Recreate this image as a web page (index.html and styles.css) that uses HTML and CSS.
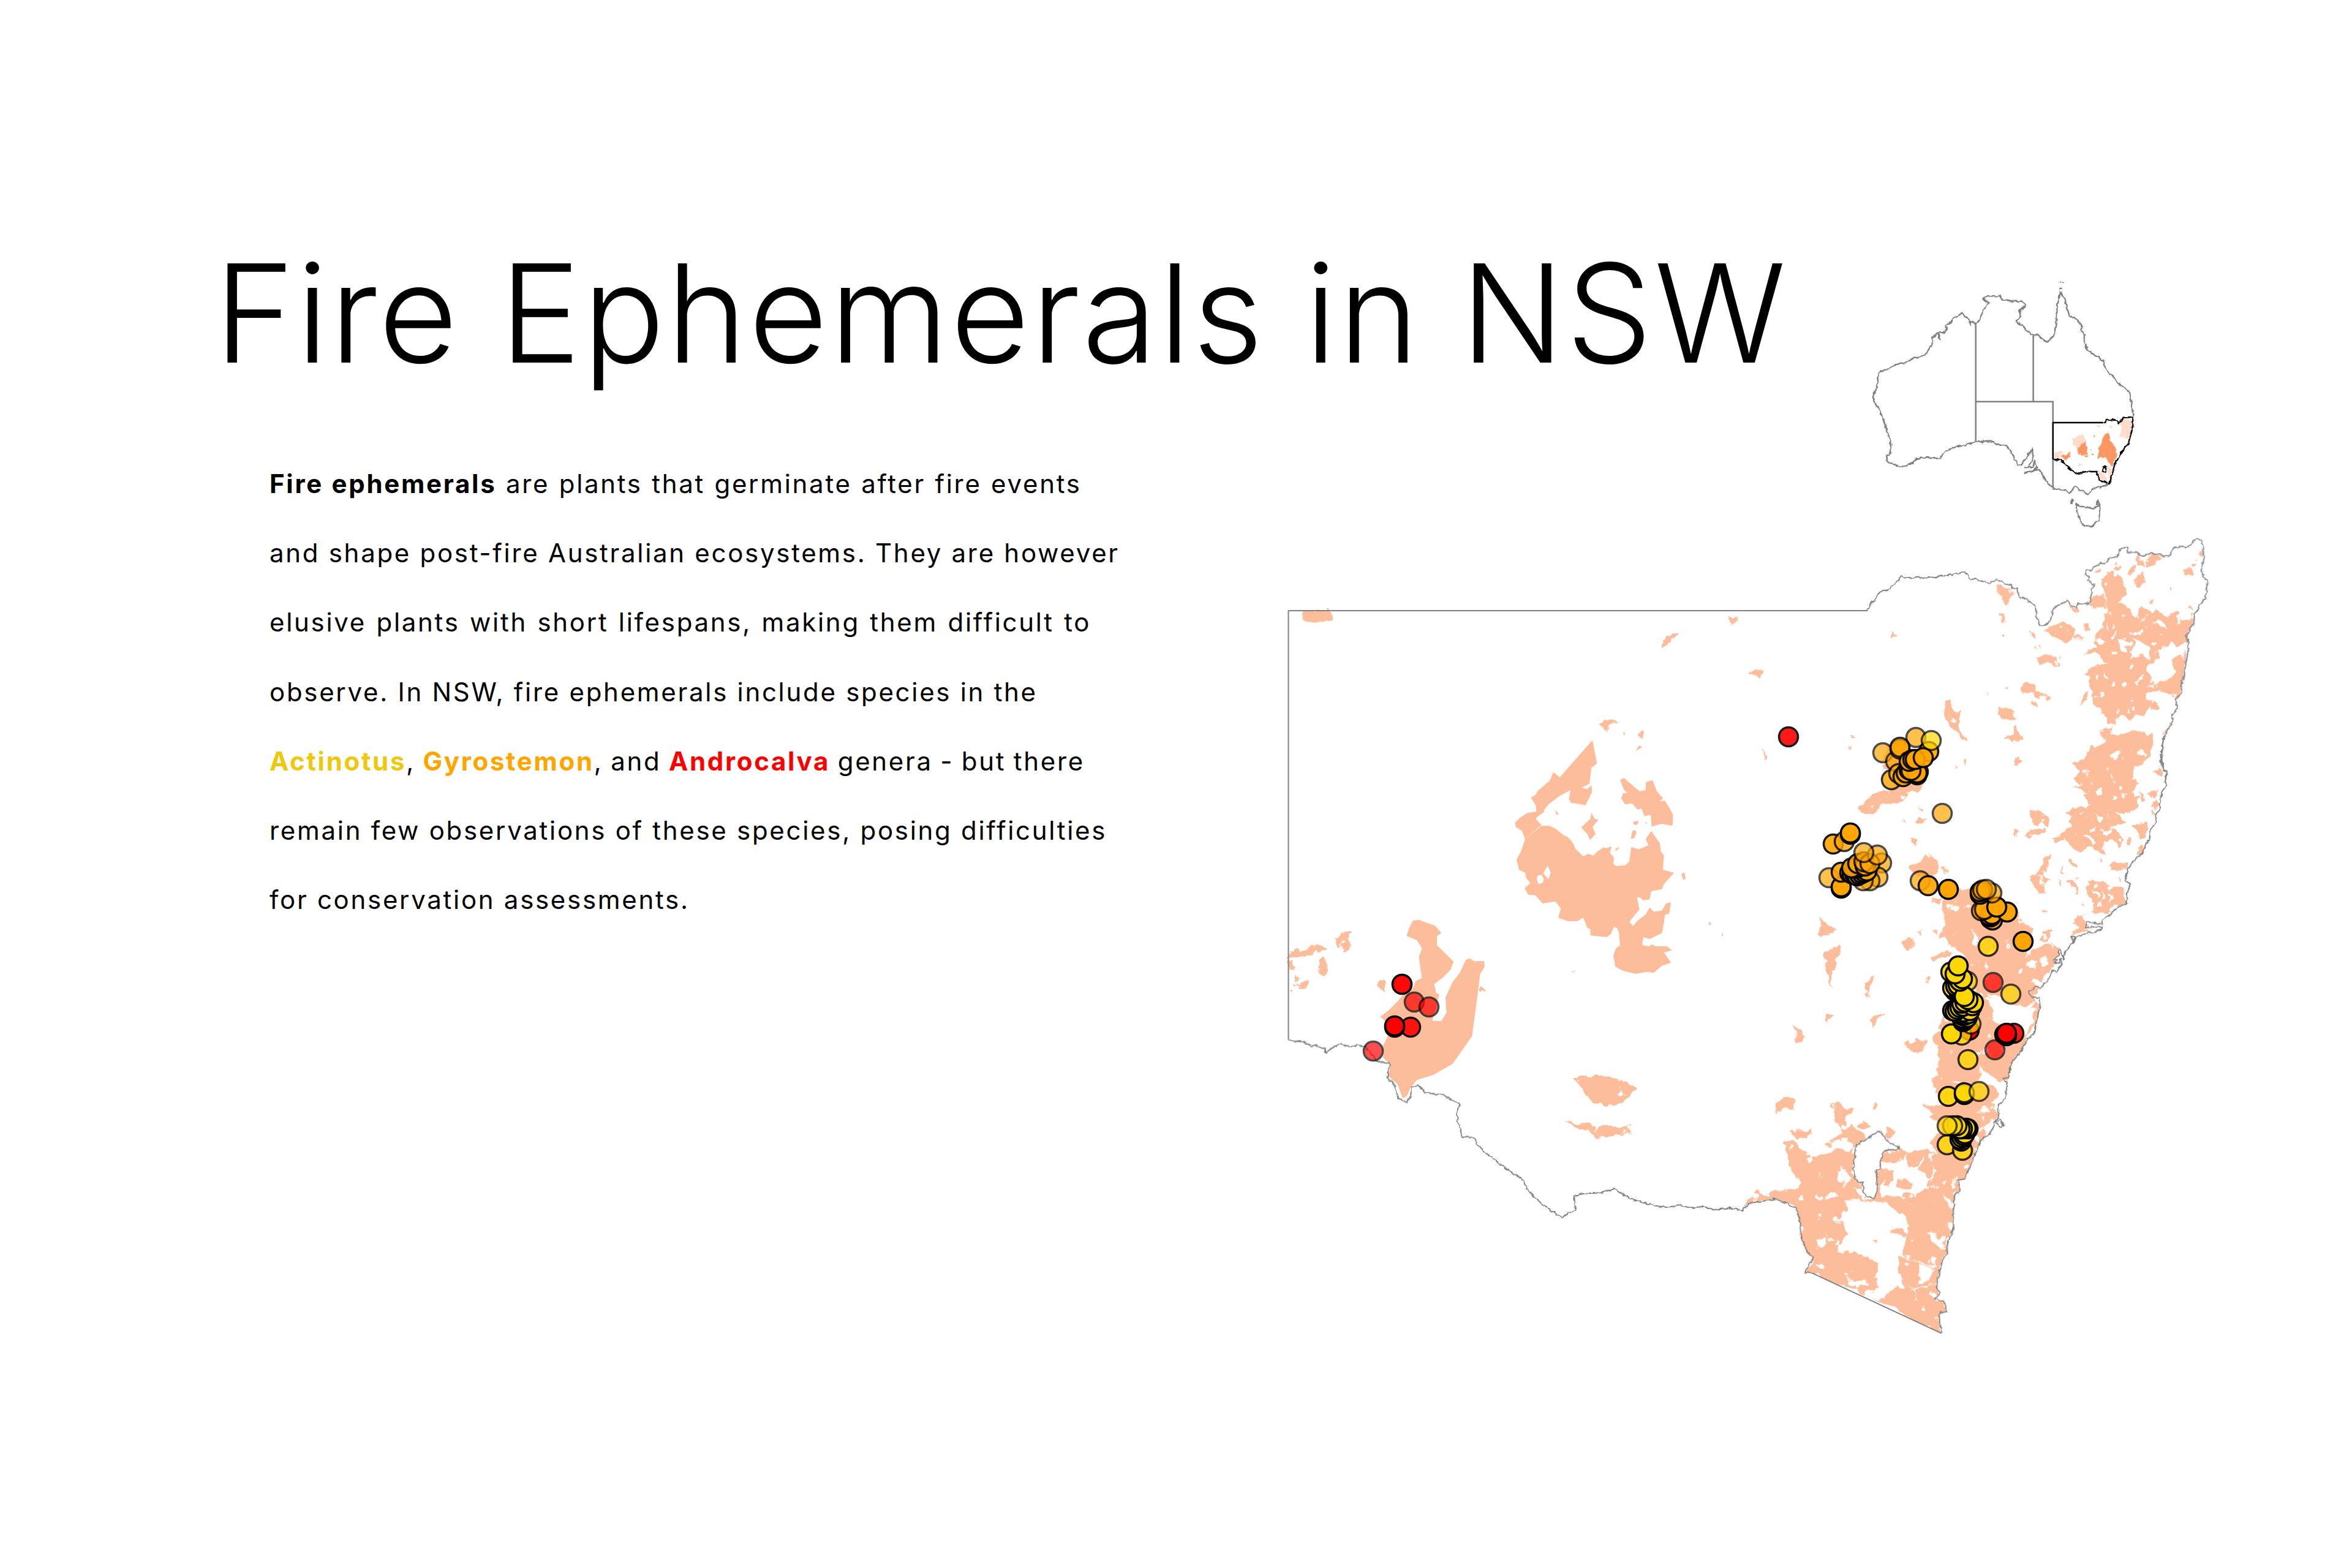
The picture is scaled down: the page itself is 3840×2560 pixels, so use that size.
FILE: index.html
```html
<!DOCTYPE html>
<html lang="en">
<head>
<meta charset="utf-8">
<title>Fire Ephemerals in NSW</title>
<link rel="stylesheet" href="styles.css">
</head>
<body>
<main class="page">
  <section class="intro">
    <h1 class="title">Fire Ephemerals in NSW</h1>
    <p class="copy">
      <span class="line gap-s"><b>Fire ephemerals</b> are plants that germinate after fire events</span>
      <span class="line">and shape post-fire Australian ecosystems. They are however</span>
      <span class="line gap-m">elusive plants with short lifespans, making them difficult to</span>
      <span class="line">observe. In NSW, fire ephemerals include species in the</span>
      <span class="line gap-n"><b class="actinotus">Actinotus</b>, <b class="gyrostemon">Gyrostemon</b>, and <b class="androcalva">Androcalva</b> genera - but there</span>
      <span class="line">remain few observations of these species, posing difficulties</span>
      <span class="line">for conservation assessments.</span>
    </p>
  </section>
  <svg class="maps" viewBox="2080 440 1580 1780" width="1580" height="1780" role="img" aria-label="Map of New South Wales with fire extent and fire ephemeral records">
    <defs>
      <filter id="rough" filterUnits="userSpaceOnUse" x="2080" y="860" width="1600" height="1340">
        <feTurbulence type="fractalNoise" baseFrequency=".055" numOctaves="4" seed="7" result="n"/>
        <feDisplacementMap in="SourceGraphic" in2="n" scale="16" xChannelSelector="R" yChannelSelector="G" result="d"/>
        <feColorMatrix in="n" type="matrix" values="0 0 0 0 0  0 0 0 0 0  0 0 0 0 0  0 0 0 -16 12.2" result="mask"/>
        <feComposite in="d" in2="mask" operator="in"/>
      </filter>
      <filter id="jag" filterUnits="userSpaceOnUse" x="2080" y="440" width="1600" height="1780">
        <feTurbulence type="fractalNoise" baseFrequency=".14" numOctaves="2" seed="4" result="n"/>
        <feDisplacementMap in="SourceGraphic" in2="n" scale="6" xChannelSelector="R" yChannelSelector="G"/>
      </filter>
    </defs>

    <!-- Australia inset -->
    <g class="jagged">
      <g transform="translate(3000 440) scale(.3571 .3333)">
        <path class="aus" d="M632,262L610,255L605,275L605,250L590,235L570,215L545,228L525,245L515,265L495,272L500,295L480,310L460,310L470,345L455,312L435,335L432,370L415,395L400,420L345,435L300,460L265,465L235,487L200,497L190,510L185,540L178,580L162,625L175,665L190,680L205,725L220,770L235,820L245,850L240,905L222,912L225,940L270,962L310,965L345,945L365,925L420,920L470,925L490,893L540,870L600,855L635,845L695,838L730,855L770,860L790,885L805,915L825,955L840,962L870,915L890,878L895,915L875,965L860,970L895,965L900,935L915,970L890,985L855,995L895,985L925,980L950,1030L985,1070L1005,1078L1040,1080L1060,1095L1085,1065L1120,1085L1140,1100L1170,1075L1245,1050"/>
        <path class="aus" d="M1352,722L1345,660L1335,600L1275,550L1260,520L1240,510L1220,470L1215,445L1175,420L1140,395L1130,340L1110,265L1085,235L1060,230L1040,150L1020,110L1005,175L1000,260L990,320L960,355L930,335L925,325L890,320L860,290L820,255L835,225L835,200L860,175L845,155L800,155L750,145L740,125L725,130L680,130L665,145L695,165L670,190L655,230L645,255L632,262"/>
        <path class="aus" d="M1090,1150L1150,1170L1200,1160L1195,1230L1155,1262L1115,1245L1095,1190ZM1070,1125L1078,1135L1068,1142ZM1190,1130L1200,1155L1185,1150ZM1018,60L1026,60M1030,65L1038,65M1016,92L1024,92"/>
        <path class="inset-pale" d="M1290,730L1345,735L1335,830L1290,815L1300,770ZM1075,830L1115,805L1140,845L1090,880L1080,860ZM1190,980L1215,1000L1240,1040L1200,1025ZM985,900L1030,885L1020,925L985,925ZM1230,960L1245,1040L1260,980ZM1100,950L1130,955L1100,965ZM1240,760L1260,765L1250,780ZM1180,760L1200,765L1190,775Z"/>
        <path class="inset-fire" d="M1090,875L1135,845L1145,905L1115,910ZM1025,915L1060,895L1065,920L1040,935ZM1240,800L1220,805L1210,840L1195,880L1190,925L1225,925L1250,960L1260,960L1280,900L1270,870L1250,840ZM1170,810L1180,810L1175,825ZM1100,895L1110,900L1105,910ZM1150,880L1162,880L1155,890ZM1165,900L1175,905L1165,915ZM1130,910L1150,915L1140,925Z"/>
        <path class="inset-nsw" d="M1215,750L1230,738L1265,735L1285,755L1310,725L1352,722L1345,790L1330,850L1295,900L1265,965L1245,1048L1195,1030L1185,990L1135,990L1095,1000L1050,965L1020,932L985,930M1212,970L1228,968L1225,990L1212,990Z"/>
      </g>
    </g>
    <g transform="translate(3000 440) scale(.3571 .3333)">
      <path class="aus" d="M632,262L632,845M632,647L985,647L985,750M895,322L895,647M985,930L985,1070"/>
      <path class="inset-nsw" d="M985,930L985,750L1215,750"/>
    </g>

    <!-- Fire extent: smooth western blocks -->
    <g transform="translate(2450 1190) scale(.3333)">
      <path class="fire" fill-rule="evenodd" d="M120,540L100,600L78,640L90,690L120,705L125,730L145,755L118,780L135,812L170,815L205,855L268,845L295,880L282,925L330,942L375,942L405,925L425,975L440,980L440,1012L520,1020L540,1005L555,970L570,975L580,1000L585,1060L565,1075L552,1110L562,1165L600,1185L660,1200L720,1190L750,1195L790,1160L835,1145L800,1095L840,1085L815,1065L760,1065L740,1055L730,1065L695,1060L695,1040L700,1020L730,1030L790,1000L800,950L805,910L825,905L835,850L810,855L790,890L750,895L730,875L710,910L670,940L650,965L630,945L680,885L668,825L680,825L700,840L730,835L738,795L790,785L800,760L850,705L795,690L800,620L785,600L780,560L738,500L710,540L725,570L675,590L640,578L630,650L610,668L565,672L552,660L555,630L535,605L545,575L515,585L505,580L475,600L455,620L430,612L405,625L365,585L355,560L330,530L305,518L270,490L240,475L200,475ZM215,695L232,670L245,705L235,735L210,710ZM180,720L200,715L212,735L205,755L185,760L178,740Z"/>
      <path class="fire" d="M450,55L472,170L445,190L435,270L395,288L425,295L445,275L448,310L415,375L395,370L345,362L335,345L342,300L290,328L240,365L210,400L215,405L175,435L175,445L200,470L120,540L105,500L75,480L70,460L95,435L130,412L175,405L172,375L148,335L170,325L185,300L240,255L258,212L290,237ZM395,482L440,440L445,410L460,440L480,445L450,480L465,515L437,545L428,520ZM585,250L605,240L620,255L680,305L710,300L712,260L745,252L765,305L795,340L780,355L805,352L825,385L845,420L842,475L790,465L750,475L740,480L735,420L705,428L690,390L670,395L645,365L610,370L590,340L600,315L622,315L605,300ZM650,455L675,450L670,470L650,468ZM645,500L660,495L665,510L655,535L638,538ZM265,400L285,415L275,422ZM885,712L900,702L907,735L895,740ZM670,30L695,5L702,15L695,50ZM660,108L680,80L693,90ZM600,15L610,20L605,35ZM1020,948L1030,948L1030,960L1020,960ZM1085,995L1090,1015L1082,1015ZM345,1195L370,1180L360,1192ZM560,590L578,578L580,585L565,598ZM705,460L720,460L715,465Z"/>
    </g>
    <g transform="translate(2100 1500) scale(.3333)">
      <path class="fire" d="M590,85L640,105L665,145L650,185L660,265L665,290L635,305L620,340L570,375L545,405L500,450L460,480L495,510L500,570L470,630L475,680L510,715L500,770L545,810L570,878L590,870L610,825L640,790L720,765L815,710L910,575L940,350L950,270L972,235L970,208L920,208L900,195L880,200L850,265L815,310L780,385L785,460L760,500L715,500L750,370L735,365L725,320L770,285L805,250L820,210L775,165L738,130L738,85L760,70L730,35L650,5L620,10L600,50Z"/>
    </g>

    <!-- Fire extent: broken eastern burns -->
    <g class="broken">
      <path class="fire" d="M2126,997L2172,997L2174,1010L2151,1018L2131,1010ZM2713,1057L2723,1039L2741,1031L2733,1044ZM3085,1031L3100,1035L3090,1045ZM2825,1005L2840,1005L2830,1022ZM2855,1099L2881,1091L2876,1108ZM2876,1223L2886,1236L2881,1240ZM2610,1180L2641,1176L2621,1193ZM2570,1757L2631,1757L2674,1775L2636,1807L2600,1800ZM2554,1830L2610,1839L2667,1839L2667,1851L2610,1856ZM2927,1672L2947,1693L2932,1702ZM3110,1706L3141,1698L3131,1719ZM2968,1497L2998,1518L2983,1527L2973,1527ZM2983,1552L3003,1544L2988,1612L2978,1569ZM3105,1539L3126,1535L3121,1548ZM3044,1604L3059,1595L3049,1629ZM2983,1655L2995,1655L2983,1672ZM3054,1663L3075,1655L3060,1680ZM2847,1967L2866,1944L2896,1947L2937,1937L2930,1965L2900,1957L2871,1962Z"/>
      <g transform="translate(2100 1500) scale(.3333)">
        <path class="fire" d="M15,160L95,150L120,130L165,130L195,150L170,170L130,175L95,170L70,185L30,185L15,200ZM14,205L50,225L40,250L15,255ZM150,215L175,185L205,235L190,280L155,250ZM240,105L270,75L305,70L320,130L280,155L255,140ZM450,320L470,295L490,330L485,360L460,345ZM945,340L960,315L975,340L950,360ZM15,345L35,350L15,365ZM40,310L100,310L100,345L60,335ZM50,265L70,290L50,300Z"/>
      </g>
      <g transform="translate(3240 870) scale(.3333)">
        <path class="fire" d="M600,200L640,195L670,225L700,265L680,310L650,335L680,345L710,370L740,410L770,365L820,385L870,390L905,410L935,375L960,420L990,440L1020,430L1020,460L990,510L995,530L1000,540L980,530L945,555L910,530L890,560L865,565L855,620L800,640L795,680L825,735L880,720L905,715L940,680L915,630L945,600L975,610L995,580L985,650L965,730L960,790L940,810L905,810L880,790L860,770L815,780L805,800L860,850L840,870L800,860L780,895L750,890L720,925L700,920L680,890L650,905L640,945L610,930L575,870L530,840L530,790L510,730L510,700L480,680L540,650L575,625L540,590L490,600L520,570L550,565L545,530L560,450L590,425L595,370L605,330L580,270L575,220Z"/>
        <path class="fire" d="M530,190L555,165L565,175L540,195ZM745,110L775,120L778,160L750,155ZM620,150L640,140L640,155ZM640,165L670,165L660,190L635,185ZM700,195L730,160L745,150L740,195L715,205ZM745,220L775,195L790,240L770,275L750,250ZM785,130L820,115L870,115L850,150L830,170L790,160ZM970,185L1000,175L1015,205L980,215ZM1010,160L1035,130L1045,150L1020,170ZM1055,95L1072,85L1068,115L1058,115ZM905,260L915,260L915,285L905,280ZM810,330L830,335L825,350ZM540,300L580,285L600,335L590,365L530,375L490,370L520,345ZM420,360L455,365L450,392L432,385ZM65,250L95,245L130,300L145,285L140,310L105,360L80,320L72,290ZM75,395L90,395L105,440L85,435ZM295,470L385,435L440,470L445,510L400,535L340,510ZM445,505L490,520L490,530L450,520ZM228,490L255,485L245,525L235,520ZM490,455L510,450L505,480L490,470ZM255,620L290,590L330,600L365,640L365,655L335,650L300,635L270,655ZM240,545L255,570L240,565ZM265,550L275,550L270,575ZM365,605L375,605L372,615ZM165,765L205,735L235,740L250,775L295,780L320,800L315,820L270,815L240,785L190,785ZM235,820L255,825L255,850L240,840ZM470,850L480,800L510,785L495,820ZM65,850L110,850L145,880L125,890L155,915L115,925L80,900L95,885ZM150,940L165,945L170,975L155,970ZM95,1015L150,1000L160,980L180,1000L165,1030L125,1025ZM80,500L100,500L100,515L85,515ZM880,970L900,955L885,985ZM565,975L600,945L630,955L615,1005L590,1015L565,1000ZM15,780L25,800L15,800ZM95,750L120,755L115,765ZM1010,400L1025,395L1015,425ZM1005,360L1020,355L1025,380L1005,375ZM670,975L720,965L790,985L830,1010L840,1045L800,1080L700,1060L650,1030Z"/>
        <path class="hole" d="M725,490L775,480L775,495L730,500ZM695,495L720,490L720,505ZM725,515L790,530L805,570L810,620L780,610L760,605L725,620L720,570L735,540ZM665,520L700,530L695,590L670,570ZM615,510L650,475L640,510L628,528ZM820,435L870,430L895,460L855,445ZM860,490L870,490L865,505ZM590,690L605,720L590,715ZM745,725L790,695L780,725L750,730ZM795,790L825,780L830,820L810,820ZM640,870L660,865L650,880ZM700,860L720,880L700,880ZM600,440L605,490L595,470Z"/>
      </g>
      <g transform="translate(3240 1200) scale(.3333)">
        <path class="fire" d="M430,135L490,110L525,55L570,50L605,20L650,40L690,30L735,50L775,60L815,100L785,135L735,170L730,195L755,245L720,280L760,300L745,330L735,370L720,395L690,375L640,375L660,400L690,430L640,445L615,460L650,475L680,500L660,540L620,510L585,535L590,580L570,585L530,550L470,570L430,550L395,510L345,525L330,505L370,490L400,460L425,445L400,380L440,355L470,335L495,365L520,330L490,290L510,280L470,265L440,250L480,245L445,210L470,165ZM820,340L840,325L855,350L835,395L818,375ZM810,185L860,160L865,195L825,195ZM800,285L850,265L835,310L815,320ZM755,280L790,310L775,335ZM95,25L150,15L180,0L165,40L140,45ZM145,130L160,110L188,130L170,150ZM225,380L280,365L300,395L285,420L250,445L235,430ZM195,495L235,460L280,465L320,460L280,475L225,505ZM140,490L160,460L172,470L160,490ZM280,600L330,590L315,625L300,670L265,670L285,640ZM230,720L270,690L325,705L285,740L290,790L260,765ZM430,895L490,880L510,935L470,960L420,980L455,935ZM420,965L480,950L530,950L430,985ZM610,640L660,620L710,620L690,665L640,670ZM500,720L545,710L595,725L630,740L680,750L690,800L685,825L630,845L600,875L525,870L540,835L510,780ZM415,610L435,610L440,640L425,640ZM410,710L440,715L455,770L425,750ZM355,700L390,730L380,740ZM380,640L405,670L385,665ZM660,690L680,690L675,725ZM275,960L330,965L305,1015L270,1005ZM740,565L775,530L790,540L775,575L745,590ZM725,440L790,430L800,455L770,510L740,460ZM690,505L705,500L715,545L695,535ZM270,1040L340,1010L370,1050L350,1090L330,1150L280,1200L210,1200L195,1100L220,1065ZM565,615L580,620L585,630L575,630ZM470,830L485,830L480,845ZM280,870L290,870L290,880ZM450,690L465,690L455,710ZM565,0L830,0L815,60L770,60L600,30Z"/>
        <path class="hole" d="M550,275L565,265L575,295L555,300ZM625,295L650,295L645,315L630,315ZM620,95L660,90L640,125ZM615,190L625,220L612,215ZM480,375L470,385L480,395ZM525,460L550,455L555,475L530,480ZM480,485L510,495L540,520L525,540L500,515ZM570,470L625,465L610,490L580,490ZM730,150L775,160L760,185L730,175ZM540,380L580,420L570,440L545,410ZM525,760L560,780L550,800ZM575,755L585,800L570,800ZM610,770L630,790L605,830ZM225,1090L260,1095L250,1150L215,1130ZM270,1100L300,1090L290,1130Z"/>
      </g>
      <g transform="translate(3000 1130) scale(.3333)">
        <path class="fire" d="M110,570L130,520L190,490L250,480L300,440L440,400L400,480L340,510L300,550L240,540L190,580L160,605ZM230,250L340,230L380,300L300,400L230,380ZM525,40L550,35L565,90L620,85L590,125L600,180L630,235L610,235L590,190L530,140ZM785,70L830,75L860,105L875,135L830,140L800,110ZM870,160L890,175L900,230L870,250L815,235L870,205ZM870,345L890,325L905,345L880,360ZM625,325L640,325L635,345ZM585,355L595,380L585,380ZM950,585L1020,600L1040,665L990,645L950,640L990,620ZM920,710L970,670L1030,680L990,695L940,715ZM865,670L890,675L875,705ZM315,640L335,630L345,645ZM380,625L405,605L450,625L410,645ZM400,570L420,580L410,590ZM360,720L395,720L385,755ZM350,860L435,805L500,835L495,880L440,880L380,880ZM55,265L80,275L60,285ZM60,200L90,210L70,215ZM480,1010L500,1040L465,1040ZM510,1000L600,960L650,950L680,1010L750,1020L800,970L810,1010L890,1130L950,1160L960,1200L500,1200L530,1110Z"/>
      </g>
      <g transform="translate(3100 1400) scale(.3333)">
        <path class="fire" fill-rule="evenodd" d="M210,200L290,180L320,150L355,140L500,200L580,250L620,330L660,350L650,430L620,480L625,540L650,610L690,640L660,660L680,720L680,810L625,870L630,910L590,960L550,1010L540,1070L500,1110L470,1070L400,1030L395,1085L370,1120L340,1100L300,1100L200,1110L150,1090L205,1060L180,1030L200,980L190,920L165,880L220,800L230,770L250,700L260,620L330,500L300,460L240,430ZM440,665L500,680L560,720L640,730L670,750L660,800L610,880L470,800L450,720ZM30,900L130,890L125,930L70,955L50,950Z"/>
        <path class="fire" d="M60,60L135,5L200,40L190,75L150,90L90,80ZM5,420L50,400L85,430L40,450ZM155,490L230,450L265,480L220,490L170,510ZM90,360L120,360L110,380ZM160,360L190,355L190,385ZM130,590L160,590L150,620ZM150,1100L220,1090L300,1115L400,1110L470,1120L490,1170L450,1200L480,1230L480,1290L400,1310L430,1350L390,1400L360,1500L170,1500L190,1420L250,1300L210,1250L110,1215L200,1220L220,1175L180,1145ZM210,60L240,50L225,80ZM165,200L205,190L190,230ZM650,100L700,60L720,130L690,180ZM610,620L690,640L640,720ZM705,260L725,270L705,280Z"/>
      </g>
      <g transform="translate(2900 1780) scale(.3333)">
        <path class="fire" d="M0,505L50,490L110,480L115,470L90,420L75,390L40,260L75,235L100,250L140,290L175,330L195,310L290,290L340,295L365,300L380,280L385,290L375,350L380,420L405,460L425,450L425,490L445,520L480,530L500,490L490,395L510,380L510,340L525,300L600,290L640,295L720,285L770,310L790,320L870,330L960,300L960,330L955,390L920,440L895,440L900,490L875,510L870,600L870,680L840,740L835,800L815,830L800,890L785,950L800,1000L775,1020L820,1035L835,1085L800,1090L805,1190L510,1040L430,1000L175,895L140,893L180,820L150,790L120,710L115,640L100,580L70,565L0,530Z"/>
        <path class="hole" d="M335,545L400,530L460,545L530,550L580,580L620,600L650,680L640,730L625,770L625,810L640,820L590,820L600,880L620,930L600,950L540,1000L500,1030L430,1000L435,990L510,970L490,930L500,850L465,830L450,815L380,785L305,785L305,760L330,730L355,700L330,670L335,640L285,625L320,620L340,580ZM190,740L245,725L250,750L220,775L195,770ZM305,395L340,400L365,430L340,470L335,435L300,445ZM380,470L420,480L440,535L400,515ZM350,930L380,915L400,935L440,930L440,960L380,960L360,950ZM520,350L560,340L590,360L620,345L640,300L650,370L680,360L700,300L720,340L700,390L760,440L770,360L780,330L740,460L695,500L690,530L640,500L580,530L510,530L510,460L550,430L540,390L520,380ZM700,850L770,870L760,940L700,930ZM620,815L700,840L780,860L785,870L700,845L640,825ZM610,940L680,965L790,950L680,975L690,1020L705,1030L680,1000L670,965ZM760,810L785,820L780,860L770,850ZM750,690L790,720L830,720L830,770L780,760L755,740ZM830,520L870,550L860,580L830,540ZM835,650L865,650L860,680ZM825,450L835,445L830,470ZM860,440L885,440L880,430ZM70,265L85,270L80,300ZM100,400L115,470L100,450ZM240,700L250,705L240,720ZM285,625L320,650L300,650ZM320,770L350,750L360,770L330,790Z"/>
        <path class="fire" d="M560,680L610,680L650,705L630,725L575,700ZM460,745L490,745L480,760ZM545,380L570,400L575,440L550,480L525,470ZM600,440L640,430L670,450L655,490L600,470ZM650,300L720,285L700,370L670,370ZM240,265L270,245L320,210L360,170L395,185L440,210L430,245L385,280L365,265L320,245L270,250L260,275ZM255,80L300,55L340,95L390,90L375,120L340,125L350,205L330,210L280,115ZM70,205L160,195L165,225L100,235ZM0,60L20,40L90,55L95,85L60,90L0,115ZM465,70L480,60L498,72L480,85ZM400,170L420,155L465,180L440,190ZM530,200L550,175L585,200L555,240L530,230ZM710,70L780,75L820,100L860,100L900,120L930,70L1000,60L1080,70L1040,110L1060,130L1020,180L985,210L990,260L960,300L870,330L800,320L780,320L760,250L800,200L800,155L750,120L770,110Z"/>
        <path class="hole" d="M985,90L1030,85L1060,100L1030,115L1000,110ZM700,125L760,135L740,140ZM1010,125L1030,130L1020,140ZM1000,190L1020,200L990,210Z"/>
      </g>
    </g>

    <!-- Trim burns at the coast -->
    <g transform="translate(3240 870) scale(.3333)">
      <path class="hole" d="M1035,32L1065,40L1072,75L1075,130L1062,165L1070,215L1092,238L1085,265L1083,320L1050,360L1028,400L1025,440L1000,480L990,510L998,540L995,590L985,650L970,720L960,790L938,815L942,860L925,890L915,935L890,980L875,1010L870,1080L862,1120L875,1160L897,1172L888,1200L1300,1200L1300,32Z"/>
    </g>
    <g transform="translate(3240 1200) scale(.3333)">
      <path class="hole" d="M885,0L875,50L862,100L870,145L878,172L897,182L885,225L892,250L870,280L857,330L858,360L835,395L845,420L810,470L805,510L790,540L775,580L735,610L705,655L690,690L692,715L715,730L700,770L695,825L640,850L615,880L578,905L575,938L545,965L500,970L450,990L430,1015L390,1075L380,1120L355,1160L330,1155L310,1200L1300,1200L1300,0Z"/>
    </g>
    <g transform="translate(3100 1400) scale(.3333)">
      <path class="hole" d="M730,600L690,640L695,720L675,800L660,870L630,885L625,905L590,960L550,1010L540,1075L530,1100L525,1180L485,1215L490,1275L465,1300L455,1340L400,1390L380,1440L355,1500L1500,1500L1500,600Z"/>
    </g>
    <g transform="translate(2900 1780) scale(.3333)">
      <path class="hole" d="M955,360L925,435L890,440L900,490L875,510L865,620L870,680L840,740L835,800L815,830L800,890L785,950L798,1000L775,1020L820,1035L835,1085L800,1090L808,1190L175,895L140,893L100,1300L1500,1300L1500,360Z"/>
    </g>

    <!-- NSW boundary -->
    <path class="border" d="M2103.500,1697L2103.500,997L3049,997"/>
    <g class="jagged">
      <path class="border" d="M3049,997L3052,990L3057,983L3063,975L3068,968L3075,965L3080,963L3087,960L3092,953L3100,947L3104,941L3112,943L3120,945L3128,942L3140,944L3150,942L3160,943L3170,940L3180,940L3190,937L3200,936L3207,933L3212,938L3217,945L3228,947L3240,950"/>
      <path class="border" d="M2408,1858L2412,1868L2420,1878L2435,1889L2450,1902L2470,1915L2488,1928L2492,1940L2505,1954L2520,1968L2535,1978L2549,1988L2560,1982L2572,1975L2570,1952L2590,1948L2612,1948L2636,1941L2650,1950L2665,1958L2682,1963L2700,1968L2720,1971L2743,1968L2760,1972L2780,1970L2800,1975L2825,1972L2845,1976L2855,1965L2871,1962L2885,1960L2900,1957"/>
      <g transform="translate(3240 870) scale(.3333)">
        <path class="border" d="M0,240L25,248L35,238L60,230L80,238L105,252L130,255L140,272L160,275L165,305L175,320L190,315L220,335L250,362L255,415L268,430L270,455L295,457L320,430L332,400L330,390L352,360L385,345L410,328L418,350L430,358L450,365L455,345L490,352L520,335L525,275L538,260L520,240L505,235L510,215L495,200L495,183L525,183L540,165L570,148L590,152L610,125L640,118L660,105L660,90L680,72L698,72L700,95L735,95L775,115L800,105L825,97L850,105L905,115L930,70L950,72L965,65L995,70L1035,32L1065,40L1072,75L1075,130L1062,165L1070,215L1092,238L1085,265L1083,320L1050,360L1028,400L1025,440L1000,480L990,510L998,540L995,590L985,650L970,720L960,790L938,815L942,860L925,890L915,935L890,980L875,1010L870,1080L862,1120L875,1160L897,1172L888,1200"/>
      </g>
      <g transform="translate(3240 1200) scale(.3333)">
        <path class="border" d="M885,0L875,50L862,100L870,145L878,172L897,182L885,225L892,250L870,280L857,330L858,360L835,395L845,420L810,470L805,510L790,540L775,580L735,610L705,655L690,690L692,715L715,730L700,770L695,825L640,850L615,880L578,905L575,925L500,915L492,945L575,938L570,955L545,965L500,970L450,990L430,1020L430,985L445,990L430,1015L390,1075L385,1100L375,1055L360,1055L365,1075L340,1100L360,1105L340,1115L365,1120L375,1095L380,1120L355,1160L330,1155L310,1200"/>
      </g>
      <g transform="translate(3100 1400) scale(.3333)">
        <path class="border" d="M730,600L690,640L680,630L630,660L650,680L690,690L695,720L675,800L660,870L630,885L625,905L590,960L550,1010L540,1075L510,1080L530,1100L525,1180L485,1215L490,1275L465,1300L495,1285L515,1310L500,1325L470,1290L455,1340L400,1390L380,1440L355,1500"/>
      </g>
      <g transform="translate(2900 1780) scale(.3333)">
        <path class="border" d="M955,360L925,435L890,440L900,490L875,510L865,620L870,680L840,740L835,800L815,830L800,890L785,950L798,1000L775,1020L820,1035L835,1085L800,1090L808,1190"/>
        <path class="border" d="M175,895L140,893L180,820L150,790L120,710L115,640L100,580L70,565L0,530"/>
        <path class="lake" d="M505,198L395,270L385,300L378,380L385,430L405,455L422,450L428,495L445,518L478,530L495,490L490,395L508,385L512,340L530,295L600,288L598,275L545,255L530,225Z"/>
      </g>
      <g transform="translate(2100 1500) scale(.3333)">
        <path class="border" d="M10,590L40,600L75,597L125,625L150,620L190,635L195,658L235,625L265,612L320,628L350,618L385,625L450,700L505,710L495,780L530,810L550,880L590,897L610,870L612,825L645,815L680,850L730,860L770,860L820,895L850,905L835,960L860,1065L925,1075"/>
      </g>
    </g>
    <g transform="translate(2900 1780) scale(.3333)">
      <path class="border" d="M808,1190L175,895"/>
    </g>

    <!-- Records -->
    <g class="red">
      <circle cx="2920" cy="1203" r="15" class="a9"/>
      <circle cx="2289" cy="1607" r="15" class="a9"/>
      <circle cx="2289" cy="1607" r="15" class="a7"/>
      <circle cx="2309" cy="1636" r="15" class="a7"/>
      <circle cx="2333" cy="1644" r="15" class="a7"/>
      <circle cx="2303" cy="1677" r="15" class="a9"/>
      <circle cx="2277" cy="1677" r="15"/>
      <circle cx="2277" cy="1675" r="15"/>
      <circle cx="2242" cy="1716" r="15" class="a7"/>
      <circle cx="3254" cy="1604" r="15" class="a7"/>
      <circle cx="3257" cy="1714" r="15" class="a7"/>
      <circle cx="3288" cy="1687" r="15" class="a9"/>
      <circle cx="3276" cy="1691" r="15"/>
      <circle cx="3273" cy="1689" r="15"/>
      <circle cx="3276" cy="1687" r="15"/>
      <circle cx="3215" cy="1682" r="15"/>
    </g>
    <g class="orange">
      <circle cx="3128" cy="1204" r="15" class="a7"/>
      <circle cx="3149" cy="1227" r="15" class="a9"/>
      <circle cx="3074" cy="1229" r="15" class="a7"/>
      <circle cx="3095" cy="1243" r="15" class="a7"/>
      <circle cx="3102" cy="1223" r="15" class="a8"/>
      <circle cx="3102" cy="1220" r="15" class="a8"/>
      <circle cx="3088" cy="1273" r="15" class="a8"/>
      <circle cx="3100" cy="1263" r="15" class="a8"/>
      <circle cx="3107" cy="1268" r="15" class="a9"/>
      <circle cx="3130" cy="1265" r="15" class="a9"/>
      <circle cx="3128" cy="1263" r="15" class="a9"/>
      <circle cx="3126" cy="1262" r="15" class="a9"/>
      <circle cx="3112" cy="1262" r="15" class="a9"/>
      <circle cx="3117" cy="1257" r="15" class="a9"/>
      <circle cx="3132" cy="1260" r="15" class="a9"/>
      <circle cx="3130" cy="1262" r="15" class="a9"/>
      <circle cx="3120" cy="1258" r="15" class="a9"/>
      <circle cx="3117" cy="1243" r="15" class="a9"/>
      <circle cx="3123" cy="1240" r="15" class="a9"/>
      <circle cx="3127" cy="1240" r="15" class="a9"/>
      <circle cx="3140" cy="1237" r="15" class="a9"/>
      <circle cx="3171" cy="1328" r="15" class="a7"/>
      <circle cx="2993" cy="1378" r="15" class="a9"/>
      <circle cx="3011" cy="1374" r="15" class="a8"/>
      <circle cx="3021" cy="1362" r="15"/>
      <circle cx="3021" cy="1360" r="15"/>
      <circle cx="2986" cy="1433" r="15" class="a7"/>
      <circle cx="3006" cy="1450" r="15"/>
      <circle cx="3006" cy="1448" r="15"/>
      <circle cx="3006" cy="1424" r="15" class="a9"/>
      <circle cx="3072" cy="1409" r="15" class="a7"/>
      <circle cx="3066" cy="1432" r="15" class="a7"/>
      <circle cx="3053" cy="1438" r="15" class="a7"/>
      <circle cx="3042" cy="1438" r="15" class="a7"/>
      <circle cx="3020" cy="1425" r="15"/>
      <circle cx="3024" cy="1427" r="15"/>
      <circle cx="3028" cy="1426" r="15"/>
      <circle cx="3032" cy="1430" r="15"/>
      <circle cx="3036" cy="1428" r="15"/>
      <circle cx="3040" cy="1426" r="15"/>
      <circle cx="3044" cy="1424" r="15"/>
      <circle cx="3048" cy="1422" r="15"/>
      <circle cx="3030" cy="1418" r="15" class="a9"/>
      <circle cx="3034" cy="1416" r="15" class="a9"/>
      <circle cx="3038" cy="1414" r="15" class="a9"/>
      <circle cx="3023" cy="1417" r="15" class="a9"/>
      <circle cx="3033" cy="1410" r="15" class="a9"/>
      <circle cx="3045" cy="1414" r="15" class="a9"/>
      <circle cx="3043" cy="1407" r="15" class="a8"/>
      <circle cx="3053" cy="1410" r="15" class="a8"/>
      <circle cx="3065" cy="1396" r="15" class="a7"/>
      <circle cx="3043" cy="1392" r="15" class="a7"/>
      <circle cx="3135" cy="1438" r="15" class="a7"/>
      <circle cx="3148" cy="1446" r="15" class="a9"/>
      <circle cx="3181" cy="1452" r="15"/>
      <circle cx="3250" cy="1500" r="15"/>
      <circle cx="3253" cy="1502" r="15"/>
      <circle cx="3250" cy="1497" r="15"/>
      <circle cx="3248" cy="1495" r="15"/>
      <circle cx="3252" cy="1493" r="15"/>
      <circle cx="3235" cy="1487" r="15" class="a8"/>
      <circle cx="3240" cy="1485" r="15" class="a8"/>
      <circle cx="3277" cy="1489" r="15"/>
      <circle cx="3260" cy="1481" r="15"/>
      <circle cx="3252" cy="1458" r="15" class="a7"/>
      <circle cx="3233" cy="1460" r="15"/>
      <circle cx="3233" cy="1456" r="15"/>
      <circle cx="3237" cy="1453" r="15" class="a8"/>
      <circle cx="3243" cy="1452" r="15" class="a7"/>
      <circle cx="3303" cy="1537" r="15"/>
    </g>
    <g class="gold">
      <circle cx="3153" cy="1209" r="15" class="a7"/>
      <circle cx="3246" cy="1545" r="15" class="a8"/>
      <circle cx="3283" cy="1623" r="15" class="a7"/>
      <circle cx="3212" cy="1602" r="15" class="a7"/>
      <circle cx="3203" cy="1690" r="15" class="a8"/>
      <circle cx="3218" cy="1672" r="15" class="a7"/>
      <circle cx="3186" cy="1688" r="15"/>
      <circle cx="3205" cy="1668" r="15"/>
      <circle cx="3207" cy="1666" r="15"/>
      <circle cx="3209" cy="1664" r="15"/>
      <circle cx="3203" cy="1662" r="15"/>
      <circle cx="3212" cy="1661" r="15"/>
      <circle cx="3204" cy="1658" r="15"/>
      <circle cx="3209" cy="1657" r="15"/>
      <circle cx="3214" cy="1655" r="15"/>
      <circle cx="3201" cy="1654" r="15"/>
      <circle cx="3206" cy="1652" r="15"/>
      <circle cx="3216" cy="1650" r="15"/>
      <circle cx="3188" cy="1650" r="15"/>
      <circle cx="3192" cy="1651" r="15"/>
      <circle cx="3196" cy="1648" r="15"/>
      <circle cx="3200" cy="1645" r="15"/>
      <circle cx="3205" cy="1643" r="15"/>
      <circle cx="3220" cy="1642" r="15"/>
      <circle cx="3203" cy="1638" r="15"/>
      <circle cx="3208" cy="1636" r="15"/>
      <circle cx="3222" cy="1637" r="15"/>
      <circle cx="3213" cy="1632" r="15"/>
      <circle cx="3190" cy="1615" r="15"/>
      <circle cx="3192" cy="1618" r="15"/>
      <circle cx="3195" cy="1620" r="15"/>
      <circle cx="3188" cy="1613" r="15"/>
      <circle cx="3199" cy="1622" r="15"/>
      <circle cx="3203" cy="1624" r="15"/>
      <circle cx="3193" cy="1610" r="15"/>
      <circle cx="3197" cy="1608" r="15"/>
      <circle cx="3207" cy="1627" r="15"/>
      <circle cx="3200" cy="1602" r="15"/>
      <circle cx="3204" cy="1598" r="15"/>
      <circle cx="3185" cy="1587" r="15" class="a9"/>
      <circle cx="3192" cy="1590" r="15"/>
      <circle cx="3197" cy="1577" r="15"/>
      <circle cx="3213" cy="1730" r="15" class="a8"/>
      <circle cx="3181" cy="1790" r="15" class="a9"/>
      <circle cx="3207" cy="1787" r="15"/>
      <circle cx="3207" cy="1784" r="15" class="a9"/>
      <circle cx="3231" cy="1782" r="15" class="a7"/>
      <circle cx="3179" cy="1869" r="15" class="a8"/>
      <circle cx="3204" cy="1878" r="15" class="a8"/>
      <circle cx="3202" cy="1863" r="15"/>
      <circle cx="3200" cy="1860" r="15"/>
      <circle cx="3203" cy="1857" r="15"/>
      <circle cx="3206" cy="1854" r="15"/>
      <circle cx="3208" cy="1851" r="15"/>
      <circle cx="3213" cy="1843" r="15"/>
      <circle cx="3210" cy="1842" r="15"/>
      <circle cx="3204" cy="1843" r="15"/>
      <circle cx="3200" cy="1843" r="15"/>
      <circle cx="3195" cy="1838" r="15" class="a9"/>
      <circle cx="3188" cy="1838" r="15" class="a8"/>
      <circle cx="3179" cy="1838" r="15" class="a7"/>
    </g>
  </svg>
</main>
</body>
</html>
```
FILE: styles.css
```css
html, body {
  margin: 0;
  padding: 0;
  background: #fff;
}

.page {
  display: grid;
  grid-template-columns: 1730px 1580px;
  width: 3840px;
  height: 2560px;
  padding-left: 350px;
  box-sizing: border-box;
}

.intro {
  padding-top: 376px;
  white-space: nowrap;
}

.title {
  margin: 0;
  font-family: "Inter", "Liberation Sans", sans-serif;
  font-size: 223px;
  font-weight: 300;
  line-height: 270px;
  letter-spacing: 2.800px;
  color: #000;
}

.copy {
  margin: 87px 0 0 90px;
  font-family: "Inter", "Liberation Sans", sans-serif;
  font-size: 42px;
  font-weight: 400;
  line-height: 113.200px;
  letter-spacing: 2.700px;
  color: #000;
}

.line {
  display: block;
}

.line b {
  font-weight: 700;
}

.gap-s { word-spacing: 1px; }
.gap-m { word-spacing: 2px; }
.gap-n { word-spacing: -2px; }

.actinotus { color: #edc80d; }
.gyrostemon { color: #ffa500; }
.androcalva { color: #f00; }

.maps {
  display: block;
  margin-top: 440px;
  overflow: visible;
}

.broken { filter: url(#rough); }
.jagged { filter: url(#jag); }

.fire { fill: #fdbd9a; }
.hole { fill: #fff; }

.border,
.lake,
.aus,
.inset-nsw {
  fill: none;
  stroke: #808080;
  stroke-width: 2;
  stroke-linejoin: round;
  vector-effect: non-scaling-stroke;
}

.aus { stroke-width: 2.500; }
.lake { fill: #fff; }
.inset-nsw { stroke: #000; stroke-width: 2.500; }
.inset-pale { fill: #ffdccb; }
.inset-fire { fill: #ff9560; }

.red circle,
.orange circle,
.gold circle {
  r: 15.500px;
}

.red, .orange, .gold {
  stroke: #000;
  stroke-width: 3.500;
}

.red { fill: #f00; }
.orange { fill: #ffa500; }
.gold { fill: #ffd700; }

.a7 { opacity: .7; }
.a8 { opacity: .8; }
.a9 { opacity: .9; }
```
